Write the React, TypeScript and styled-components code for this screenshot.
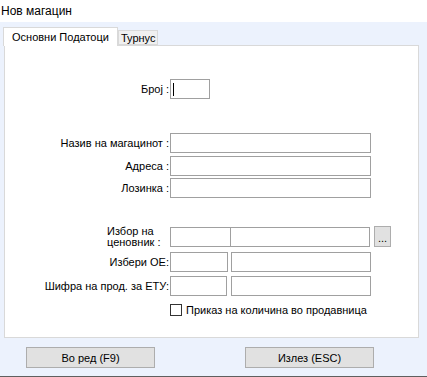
import React from "react";
import styled, { createGlobalStyle } from "styled-components";

const Global = createGlobalStyle`
  html, body { margin: 0; padding: 0; background: #ffffff; }
  body { font-family: "Liberation Sans", Arial, sans-serif; font-size: 11px; color: #000; }
  * { box-sizing: border-box; }
`;

const Window = styled.div`
  width: 427px;
  height: 377px;
  display: flex;
  flex-direction: column;
  overflow: hidden;
`;

const TitleBar = styled.div`
  height: 22px;
  background: #ffffff;
  padding: 4px 0 0 1px;
  font-size: 12px;
  line-height: 14px;
`;

const Body = styled.div`
  flex: 1;
  background: #ecf2fd;
  display: flex;
  flex-direction: column;
  padding-top: 5px;
`;

const TabStrip = styled.div`
  display: flex;
  align-items: flex-end;
  padding-left: 3px;
  height: 18px;
  position: relative;
  z-index: 1;
`;

const Tab = styled.div<{ $active?: boolean }>`
  height: ${(p) => (p.$active ? 19 : 15)}px;
  padding: ${(p) => (p.$active ? "3px 8px 0 8px" : "1px 2px 0 2px")};
  background: ${(p) => (p.$active ? "#ffffff" : "#f0f0f0")};
  border: 1px solid #d9d9d9;
  border-bottom: ${(p) => (p.$active ? "none" : "1px solid #d9d9d9")};
  margin-bottom: ${(p) => (p.$active ? "-1px" : "0")};
  line-height: 13px;
  white-space: nowrap;
`;

const Panel = styled.div`
  margin: 0 8px 0 4px;
  height: 293px;
  background: #ffffff;
  border: 1px solid #d9d9d9;
  display: flex;
  flex-direction: column;
`;

const Row = styled.div<{ $top: number }>`
  display: grid;
  grid-template-columns: 165px auto;
  align-items: center;
  margin-top: ${(p) => p.$top}px;
`;

const Label = styled.div<{ $left?: boolean }>`
  text-align: ${(p) => (p.$left ? "left" : "right")};
  padding-right: 1px;
  padding-left: ${(p) => (p.$left ? "102px" : "0")};
  line-height: 11px;
  white-space: nowrap;
`;

const Fields = styled.div`
  display: flex;
  align-items: center;
`;

const Input = styled.div<{ $w: number; $gap?: number }>`
  width: ${(p) => p.$w}px;
  height: 20px;
  border: 1px solid #a0a0a0;
  background: #ffffff;
  margin-left: ${(p) => p.$gap ?? 0}px;
  display: flex;
  align-items: center;
  padding-left: 2px;
`;

const Caret = styled.span`
  width: 1px;
  height: 13px;
  background: #000;
`;

const DotsButton = styled.div`
  width: 17px;
  height: 21px;
  margin-left: 4px;
  margin-top: -1px;
  border: 1px solid #adadad;
  background: #e1e1e1;
  display: flex;
  align-items: center;
  justify-content: center;
  line-height: 10px;
  padding-top: 2px;
`;

const CheckRow = styled.label`
  display: flex;
  align-items: center;
  gap: 4px;
`;

const Box = styled.span`
  width: 12px;
  height: 12px;
  border: 1px solid #333;
  background: #fff;
`;

const Buttons = styled.div`
  display: flex;
  padding-left: 26px;
  margin-top: 9px;
  gap: 90px;
`;

const Button = styled.div`
  width: 129px;
  height: 21px;
  border: 1px solid #adadad;
  background: #e1e1e1;
  display: flex;
  align-items: center;
  justify-content: center;
`;

const BottomLine = styled.div`
  margin-top: auto;
  height: 1px;
  background: #5f5f5f;
`;

export default function App() {
  return (
    <>
      <Global />
      <Window>
        <TitleBar>Нов магацин</TitleBar>
        <Body>
          <TabStrip>
            <Tab $active>Основни Податоци</Tab>
            <Tab>Турнус</Tab>
          </TabStrip>
          <Panel>
            <Row $top={33}>
              <Label>Број :</Label>
              <Fields>
                <Input $w={40}>
                  <Caret />
                </Input>
              </Fields>
            </Row>
            <Row $top={34}>
              <Label>Назив на магацинот :</Label>
              <Fields>
                <Input $w={201} />
              </Fields>
            </Row>
            <Row $top={3}>
              <Label>Адреса :</Label>
              <Fields>
                <Input $w={201} />
              </Fields>
            </Row>
            <Row $top={2}>
              <Label>Лозинка :</Label>
              <Fields>
                <Input $w={201} />
              </Fields>
            </Row>
            <Row $top={28}>
              <Label $left>
                Избор на
                <br />
                ценовник :
              </Label>
              <Fields>
                <Input $w={61} />
                <Input $w={140} $gap={-1} />
                <DotsButton>...</DotsButton>
              </Fields>
            </Row>
            <Row $top={4}>
              <Label>Избери ОЕ:</Label>
              <Fields>
                <Input $w={58} />
                <Input $w={140} $gap={3} />
              </Fields>
            </Row>
            <Row $top={4}>
              <Label>Шифра на прод. за ЕТУ:</Label>
              <Fields>
                <Input $w={57} />
                <Input $w={140} $gap={4} />
              </Fields>
            </Row>
            <Row $top={8}>
              <span />
              <CheckRow>
                <Box />
                Приказ на количина во продавница
              </CheckRow>
            </Row>
          </Panel>
          <Buttons>
            <Button>Во ред (F9)</Button>
            <Button>Излез (ESC)</Button>
          </Buttons>
          <BottomLine />
        </Body>
      </Window>
    </>
  );
}
